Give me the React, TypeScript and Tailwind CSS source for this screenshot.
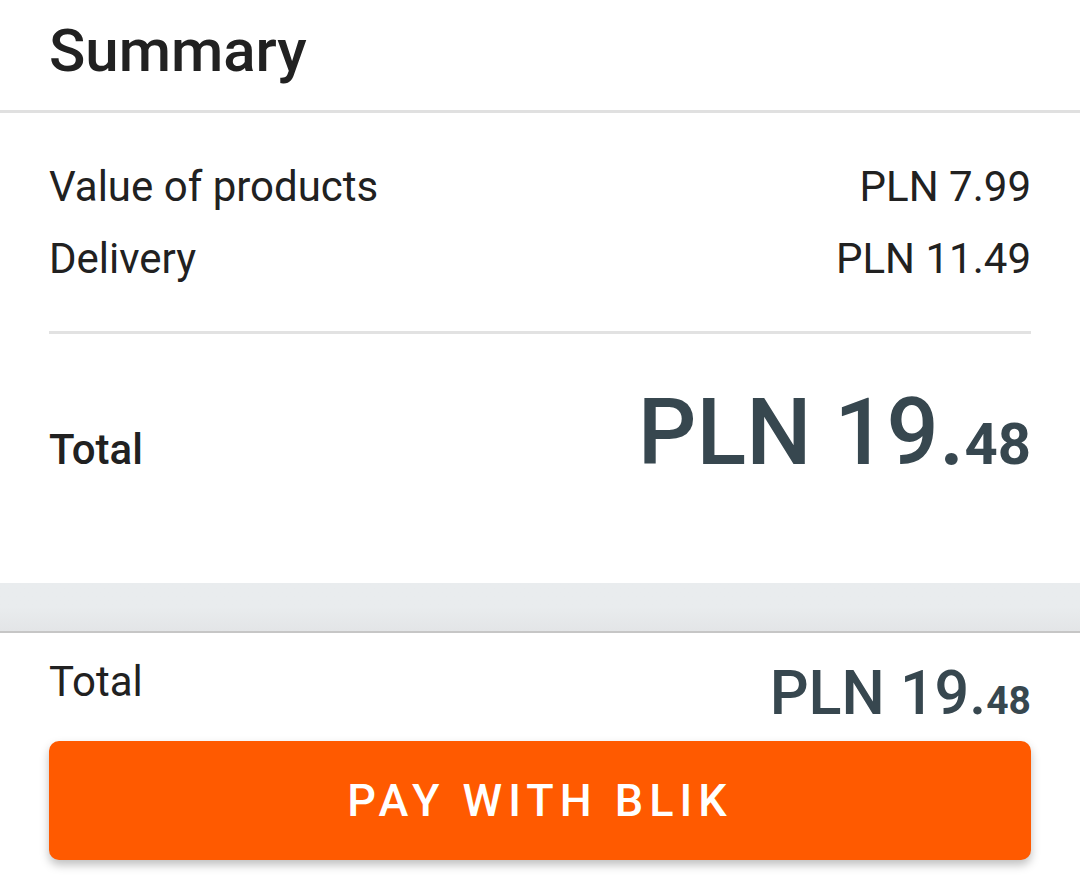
import React from 'react';

interface PriceProps {
  main: string;
  cents: string;
  big?: boolean;
}

const Price: React.FC<PriceProps> = ({ main, cents, big }) => {
  return (
    <div className={`flex items-baseline text-[#37474f] ${big ? 'h-[90px]' : 'h-[60px]'}`}>
      <span className={big ? 'text-[92px] leading-[90px] font-medium' : 'text-[61px] leading-[60px] font-medium'}>
        {main}
      </span>
      <span className={big ? 'text-[58px] leading-none font-bold' : 'text-[39px] leading-none font-bold'}>{cents}</span>
    </div>
  );
};

const App: React.FC = () => {
  return (
    <div className="w-[1080px] h-[893px] overflow-hidden bg-white text-[#212121] font-['Roboto',sans-serif] flex flex-col">
      {/* header */}
      <div className="h-[113px] shrink-0 border-b-[3px] border-[#e0e0e0] px-[49px] pt-[21px]">
        <h1 className="text-[60px] leading-[60px] font-medium">Summary</h1>
      </div>

      {/* summary lines */}
      <div className="px-[49px] pt-[38px] pb-[105px]">
        <div className="flex justify-between text-[42px] leading-[72px]">
          <span>Value of products</span>
          <span>PLN 7.99</span>
        </div>
        <div className="flex justify-between text-[42px] leading-[72px]">
          <span>Delivery</span>
          <span>PLN 11.49</span>
        </div>
        <div className="mt-[36px] h-[3px] bg-[#e2e2e2]" />
        <div className="mt-[54px] h-[90px] flex items-baseline justify-between">
          <span className="text-[42px] leading-none font-medium">Total</span>
          <Price main="PLN 19." cents="48" big />
        </div>
      </div>

      <div className="h-[50px] shrink-0 bg-gradient-to-b from-[#e9ecee] via-[#e9ecee] to-[#e3e5e7] border-b-[2px] border-[#c6c6c6]" />

      {/* bottom bar */}
      <div className="px-[49px] pt-[24px]">
        <div className="h-[66px] flex items-start justify-between">
          <span className="text-[42px] leading-[50px]">Total</span>
          <div className="mt-[6px]">
            <Price main="PLN 19." cents="48" />
          </div>
        </div>
        <button className="mt-[18px] w-full h-[119px] rounded-[10px] bg-[#ff5a00] text-white text-[45px] font-medium tracking-[6px] shadow-[0_5px_10px_rgba(0,0,0,0.25)]">
          PAY WITH BLIK
        </button>
      </div>
    </div>
  );
};

export default App;
